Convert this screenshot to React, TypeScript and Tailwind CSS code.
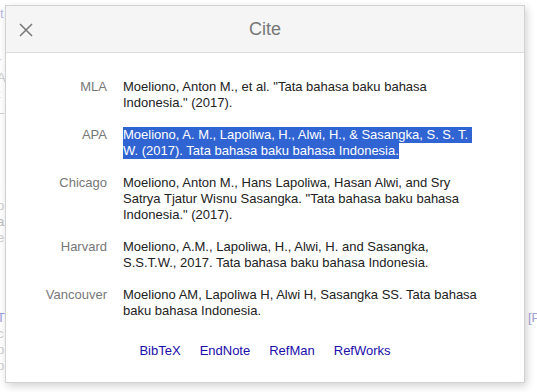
import React from "react";

const rows: { label: string; lines: string[]; selected?: boolean }[] = [
  { label: "MLA", lines: ['Moeliono, Anton M., et al. "Tata bahasa baku bahasa', 'Indonesia." (2017).'] },
  {
    label: "APA",
    lines: ["Moeliono, A. M., Lapoliwa, H., Alwi, H., & Sasangka, S. S. T.\u00a0", "W. (2017). Tata bahasa baku bahasa Indonesia."],
    selected: true,
  },
  {
    label: "Chicago",
    lines: [
      "Moeliono, Anton M., Hans Lapoliwa, Hasan Alwi, and Sry",
      'Satrya Tjatur Wisnu Sasangka. "Tata bahasa baku bahasa',
      'Indonesia." (2017).',
    ],
  },
  {
    label: "Harvard",
    lines: ["Moeliono, A.M., Lapoliwa, H., Alwi, H. and Sasangka,", "S.S.T.W., 2017. Tata bahasa baku bahasa Indonesia."],
  },
  {
    label: "Vancouver",
    lines: ["Moeliono AM, Lapoliwa H, Alwi H, Sasangka SS. Tata bahasa", "baku bahasa Indonesia."],
  },
];

const bgLeft = [
  { t: "it", c: "text-[#b9b9e0]" },
  { t: "", c: "" },
  { t: "", c: "" },
  { t: "r", c: "text-[#c9c9d6]" },
  { t: "A", c: "text-[#cfcfcf]" },
  { t: "t", c: "text-[#cfcfcf]" },
  { t: "L", c: "text-[#cfcfcf]" },
  { t: "", c: "" },
  { t: "", c: "" },
  { t: "", c: "" },
  { t: "", c: "" },
  { t: "I", c: "text-[#9d9ddb]" },
  { t: "o", c: "text-[#cfcfcf]" },
  { t: "a", c: "text-[#bdbdbd]" },
  { t: "e", c: "text-[#cfcfcf]" },
  { t: "", c: "" },
  { t: "", c: "" },
  { t: "", c: "" },
  { t: "", c: "" },
  { t: "T", c: "text-[#9d9ddb]" },
  { t: "c", c: "text-[#cfcfcf]" },
  { t: "p", c: "text-[#cfcfcf]" },
  { t: "p", c: "text-[#cfcfcf]" },
];

export default function App() {
  return (
    <div
      className="relative w-[537px] h-[392px] overflow-hidden bg-white"
      style={{ fontFamily: '"Liberation Sans", Arial, sans-serif' }}
    >
      {/* background page */}
      <div className="flex justify-between w-full h-full">
        <div className="flex flex-col -ml-[3px] pt-[6px] text-[13px] leading-[16px]">
          {bgLeft.map((b, i) => (
            <div key={i} className={`h-[16px] ${b.c}`}>
              {b.t || "\u00a0"}
            </div>
          ))}
        </div>
        <div className="w-[9px] overflow-hidden whitespace-nowrap flex flex-col pt-[310px] text-[13px] leading-[16px] text-[#a3a3d6]">
          <div>[PDF]</div>
        </div>
      </div>

      {/* dialog overlay */}
      <div className="absolute left-[5px] top-[5px] w-[520px] h-[378px] bg-white border border-[#d2d2d2] shadow-[2px_3px_8px_rgba(0,0,0,0.18)] flex flex-col">
        <div className="h-[47px] shrink-0 bg-[#f5f5f5] border-b border-[#dcdcdc] grid grid-cols-[40px_1fr_40px] items-center">
          <div className="flex items-center justify-center pt-[1px]">
            <svg width="14" height="14" viewBox="0 0 14 14" fill="none">
              <path d="M1 1L13 13M13 1L1 13" stroke="#777" strokeWidth="1.5" />
            </svg>
          </div>
          <div className="text-center text-[18px] text-[#777] leading-[22px]">Cite</div>
          <div />
        </div>

        <div className="pt-[26px] flex flex-col gap-[16px] text-[13px] leading-[16px]">
          {rows.map((r) => (
            <div key={r.label} className="grid grid-cols-[101px_1fr] gap-x-[16px]">
              <div className="text-right text-[#777]">{r.label}</div>
              <div className="text-[#222] whitespace-nowrap">
                {r.lines.map((l, i) => (
                  <div
                    key={i}
                    className={r.selected ? "w-fit bg-[#3064d2] text-white" : ""}
                  >
                    {l}
                  </div>
                ))}
              </div>
            </div>
          ))}
        </div>

        <div className="mt-[24px] flex justify-center gap-[19px] text-[13px] leading-[16px] text-[#1a0dab]">
          <span>BibTeX</span>
          <span>EndNote</span>
          <span>RefMan</span>
          <span>RefWorks</span>
        </div>
      </div>
    </div>
  );
}
